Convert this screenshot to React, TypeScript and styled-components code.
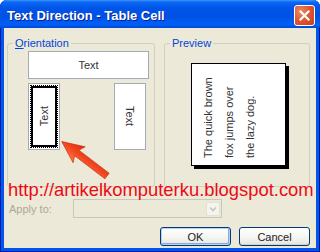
import React from "react";
import styled, { createGlobalStyle } from "styled-components";

const Global = createGlobalStyle`
  html, body { margin: 0; padding: 0; width: 320px; height: 252px; overflow: hidden; background: #ffffff; }
  body { font-family: "Liberation Sans", Arial, sans-serif; }
`;

const Window = styled.div`
  position: relative;
  width: 320px;
  height: 252px;
  box-sizing: border-box;
  display: flex;
  flex-direction: column;
  background: #0055ea;
  border-radius: 7px 7px 0 0;
  overflow: hidden;
  box-shadow: inset 1px 0 0 #0019a8, inset -1px 0 0 #0019a8, inset 0 -1px 0 #0019a8;
`;

const TitleBar = styled.div`
  flex: none;
  height: 28px;
  box-sizing: border-box;
  display: flex;
  align-items: center;
  justify-content: space-between;
  padding: 0 5px 0 7px;
  background: linear-gradient(
    180deg,
    #3d95ff 0%,
    #0a66f4 8%,
    #0054e8 30%,
    #0052e5 60%,
    #0060f8 88%,
    #0048d0 100%
  );
`;

const Title = styled.span`
  color: #ffffff;
  font: bold 13px "Liberation Sans", Arial, sans-serif;
  text-shadow: 1px 1px 0 #0a1e8c;
  margin-top: 2px;
  white-space: nowrap;
`;

const CloseButton = styled.div`
  width: 21px;
  height: 21px;
  box-sizing: border-box;
  margin-top: 2px;
  border: 1px solid #ffffff;
  border-radius: 3px;
  background: radial-gradient(circle at 30% 30%, #f08a6a 0%, #e0582f 45%, #c4401c 100%);
  display: flex;
  align-items: center;
  justify-content: center;
`;

const Body = styled.div`
  flex: 1;
  margin: 0 4px 4px 4px;
  background: #ece9d8;
  padding: 9px 6px 0 3px;
  display: flex;
  flex-direction: column;
`;

const GroupRow = styled.div`
  display: flex;
  gap: 9px;
`;

const Group = styled.fieldset<{ $width?: number }>`
  margin: 0;
  padding: 0;
  min-width: 0;
  height: 150px;
  box-sizing: border-box;
  border: 1px solid #d0d0bf;
  border-radius: 3px;
  ${(p) => (p.$width ? `width: ${p.$width}px; flex: none;` : `flex: 1;`)}
`;

const Legend = styled.legend`
  margin-left: 5px;
  padding: 0 2px;
  font-size: 11px;
  line-height: 12px;
  color: #0046d5;
`;

const OrientBody = styled.div`
  padding: 2px 0 0 20px;
`;

const HOption = styled.div`
  width: 121px;
  height: 28px;
  box-sizing: border-box;
  border: 1px solid #a3abb5;
  background: #ffffff;
  display: flex;
  align-items: center;
  justify-content: center;
  font-size: 11px;
  color: #333333;
`;

const VRow = styled.div`
  width: 118px;
  margin-top: 4px;
  display: flex;
  justify-content: space-between;
`;

const VOption = styled.div`
  width: 32px;
  height: 67px;
  box-sizing: border-box;
  border: 1px solid #a3abb5;
  background: #ffffff;
  padding: 1px;
  display: flex;
`;

const FocusRing = styled.div`
  flex: 1;
  border: 1px dotted #000000;
  display: flex;
`;

const SelectedFrame = styled.div`
  flex: 1;
  border: 2px solid #000000;
  background: #ffffff;
  display: flex;
  align-items: center;
  justify-content: center;
`;

const PlainFrame = styled.div`
  flex: 1;
  display: flex;
  align-items: center;
  justify-content: center;
`;

const VText = styled.span<{ $up?: boolean }>`
  writing-mode: vertical-rl;
  font-size: 11px;
  line-height: 12px;
  color: #333333;
  ${(p) => (p.$up ? "transform: rotate(180deg);" : "")}
`;

const PreviewBody = styled.div`
  padding: 14px 0 0 26px;
`;

const Page = styled.div`
  width: 95px;
  height: 103px;
  box-sizing: border-box;
  border: 1px solid #000000;
  box-shadow: 3px 3px 0 #000000;
  background: #ffffff;
  padding: 7px 0 7px 6px;
  display: flex;
`;

const PreviewText = styled.div`
  writing-mode: vertical-rl;
  transform: rotate(180deg);
  font-size: 11px;
  line-height: 21px;
  color: #333333;
  white-space: nowrap;
`;

const ApplyRow = styled.div`
  display: flex;
  align-items: center;
  margin-top: 12px;
  padding-left: 2px;
`;

const ApplyLabel = styled.span`
  width: 64px;
  font-size: 11px;
  color: #aca899;
`;

const Combo = styled.div`
  width: 149px;
  height: 19px;
  box-sizing: border-box;
  border: 1px solid #c9c7ba;
  background: #ece9d8;
  display: flex;
  justify-content: flex-end;
  align-items: center;
  padding-right: 1px;
`;

const ComboArrow = styled.div`
  width: 14px;
  height: 14px;
  box-sizing: border-box;
  border: 1px solid #e2e1d8;
  border-radius: 2px;
  background: #f5f4ee;
  display: flex;
  align-items: center;
  justify-content: center;
`;

const ButtonRow = styled.div`
  display: flex;
  justify-content: flex-end;
  gap: 8px;
  margin-top: 9px;
`;

const Button = styled.button<{ $default?: boolean }>`
  width: 71px;
  height: 19px;
  box-sizing: border-box;
  padding: 0;
  border: 1px solid #003c74;
  border-radius: 3px;
  background: linear-gradient(180deg, #ffffff 0%, #f5f5f1 55%, #e6e4db 100%);
  font: 11px "Liberation Sans", Arial, sans-serif;
  color: #222222;
  box-shadow: ${(p) =>
    p.$default
      ? "inset 0 0 0 1px #b8d0f5, inset -1px -1px 0 1px #86a8e2"
      : "inset 0 -1px 0 #d6d0c5"};
`;

const Watermark = styled.div`
  position: absolute;
  left: 8px;
  top: 181px;
  font: 18.4px/18px "Liberation Sans", Arial, sans-serif;
  color: #ee0a14;
  white-space: nowrap;
  pointer-events: none;
`;

const ArrowOverlay = styled.svg`
  position: absolute;
  left: 50px;
  top: 130px;
  width: 65px;
  height: 55px;
  pointer-events: none;
`;

export default function App() {
  return (
    <>
      <Global />
      <Window>
        <TitleBar>
          <Title>Text Direction - Table Cell</Title>
          <CloseButton>
            <svg width="11" height="11" viewBox="0 0 11 11">
              <path d="M1.5 1.5 L9.5 9.5 M9.5 1.5 L1.5 9.5" stroke="#ffffff" strokeWidth="2.2" strokeLinecap="square" />
            </svg>
          </CloseButton>
        </TitleBar>
        <Body>
          <GroupRow>
            <Group $width={148}>
              <Legend>
                <u>O</u>rientation
              </Legend>
              <OrientBody>
                <HOption>Text</HOption>
                <VRow>
                  <VOption>
                    <FocusRing>
                      <SelectedFrame>
                        <VText $up>Text</VText>
                      </SelectedFrame>
                    </FocusRing>
                  </VOption>
                  <VOption>
                    <PlainFrame>
                      <VText>Text</VText>
                    </PlainFrame>
                  </VOption>
                </VRow>
              </OrientBody>
            </Group>
            <Group>
              <Legend>Preview</Legend>
              <PreviewBody>
                <Page>
                  <PreviewText>
                    The quick brown
                    <br />
                    fox jumps over
                    <br />
                    the lazy dog.
                  </PreviewText>
                </Page>
              </PreviewBody>
            </Group>
          </GroupRow>
          <ApplyRow>
            <ApplyLabel>Apply to:</ApplyLabel>
            <Combo>
              <ComboArrow>
                <svg width="8" height="6" viewBox="0 0 8 6">
                  <path d="M1 1.5 L4 4.5 L7 1.5" stroke="#c9c7ba" strokeWidth="1.6" fill="none" />
                </svg>
              </ComboArrow>
            </Combo>
          </ApplyRow>
          <ButtonRow>
            <Button $default>OK</Button>
            <Button>Cancel</Button>
          </ButtonRow>
        </Body>
        <Watermark>http://artikelkomputerku.blogspot.com</Watermark>
        <ArrowOverlay viewBox="50 130 65 55">
          <defs>
            <linearGradient id="arrowFill" x1="0" y1="0" x2="0" y2="1">
              <stop offset="0" stopColor="#ff7a48" />
              <stop offset="0.5" stopColor="#f2461e" />
              <stop offset="1" stopColor="#d8300e" />
            </linearGradient>
          </defs>
          <g transform="translate(107 176) rotate(217.3)">
            <path
              d="M0 -3.5 L38 -3.5 L35 -10 L57 0 L35 10 L38 3.5 L0 3.5 Z"
              fill="url(#arrowFill)"
              stroke="#c42a0c"
              strokeWidth="0.6"
              strokeLinejoin="round"
            />
          </g>
        </ArrowOverlay>
      </Window>
    </>
  );
}
